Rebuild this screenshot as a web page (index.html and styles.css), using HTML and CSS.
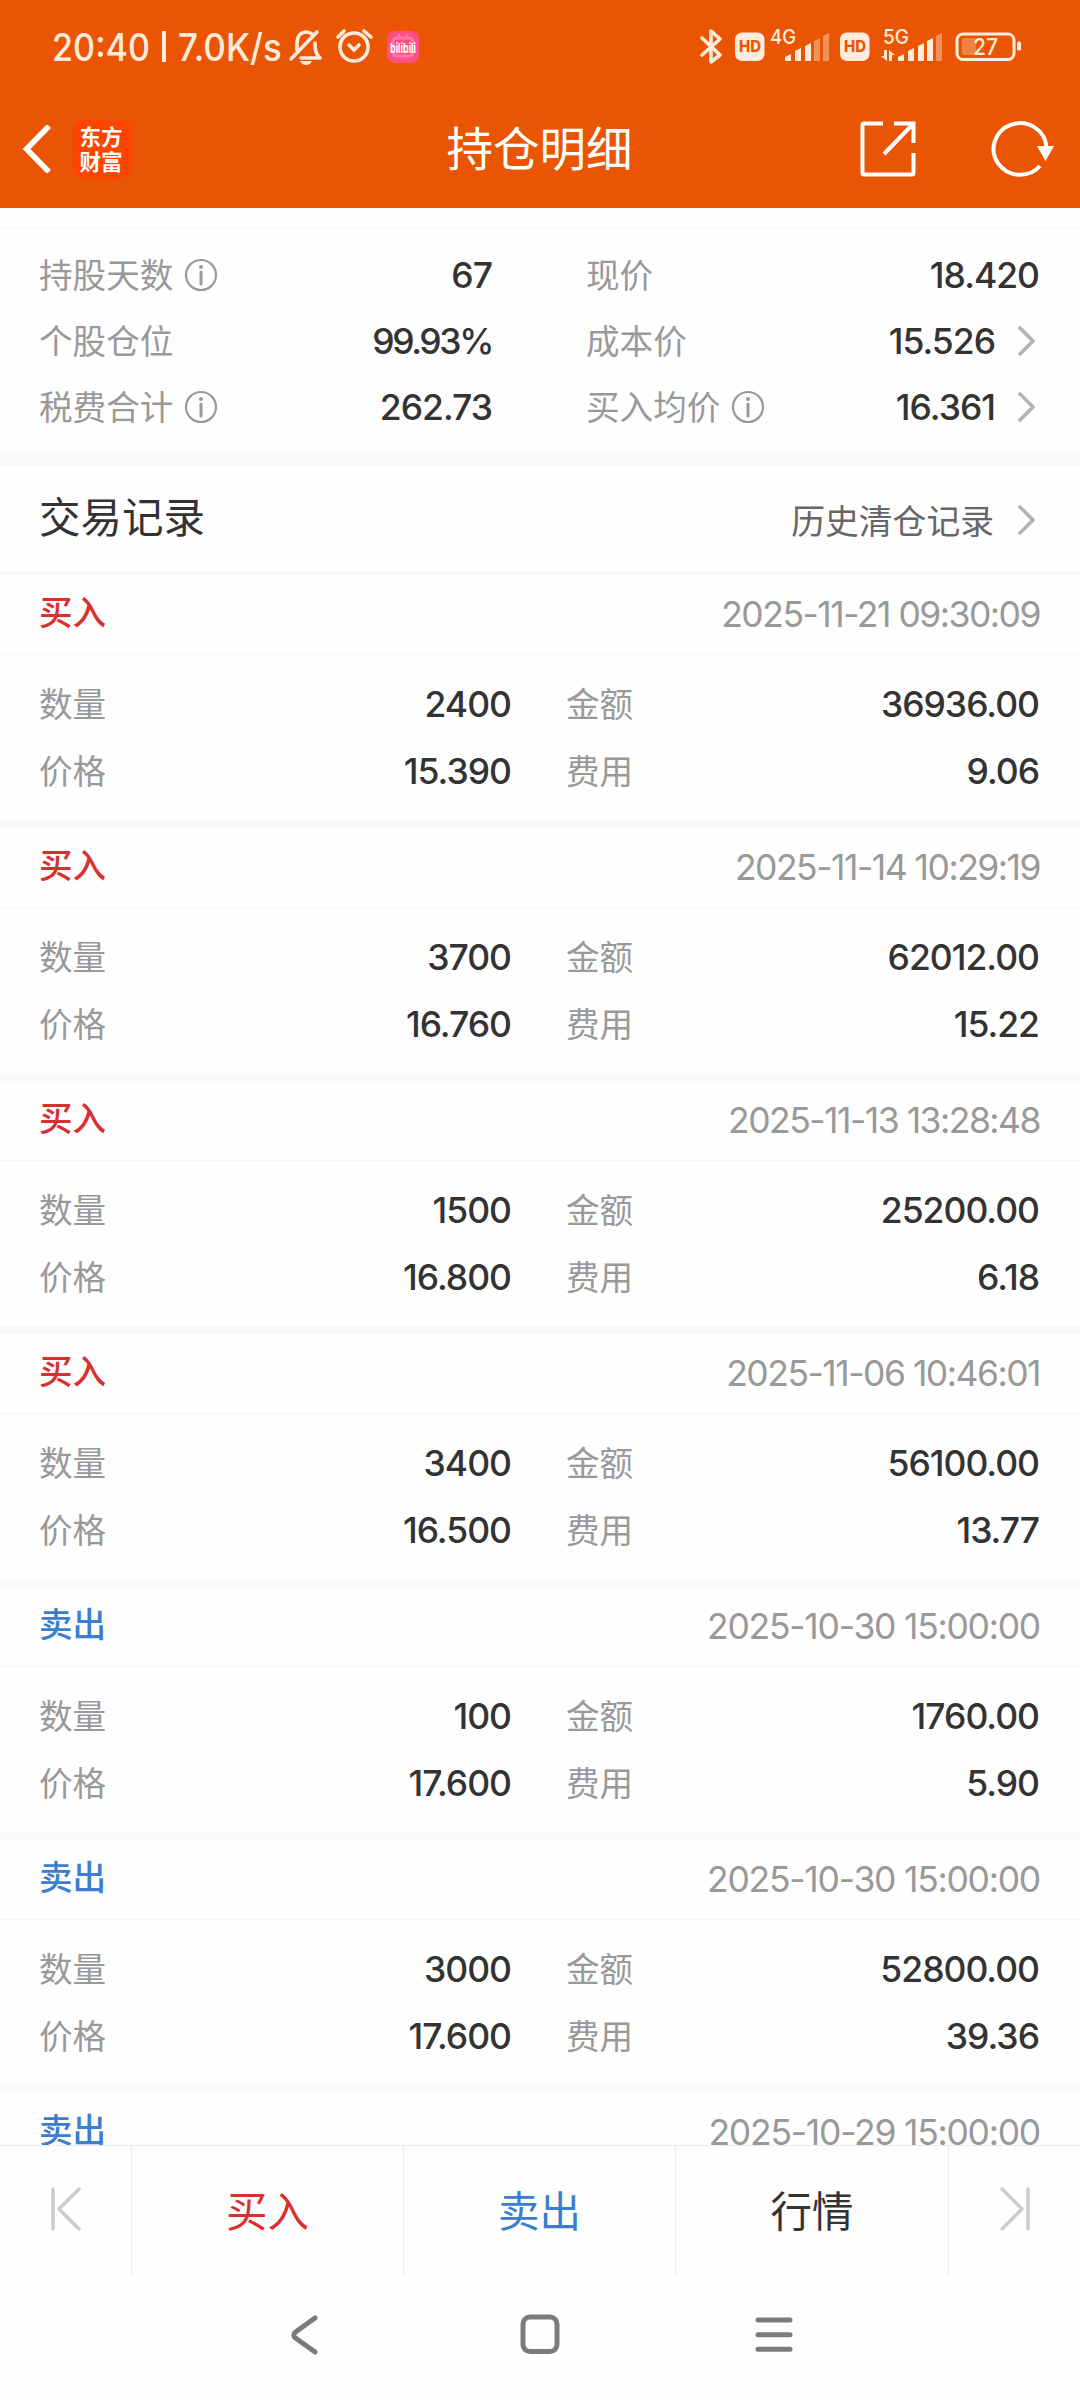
FILE: index.html
```html
<!DOCTYPE html>
<html lang="zh-CN">
<head>
<meta charset="utf-8">
<title>持仓明细</title>
<link rel="stylesheet" href="styles.css">
<script src="app.js" defer></script>
</head>
<body>
<svg class="defs" width="0" height="0">
  <symbol id="chev" viewBox="0 0 18 30"><path d="M2 2 15 15 2 28" fill="none" stroke="#b3b3b3" stroke-width="3.6" stroke-linecap="round" stroke-linejoin="round"/></symbol>
  <symbol id="info" viewBox="0 0 34 34"><circle cx="17" cy="17" r="15" fill="none" stroke="#999" stroke-width="2.2"/><circle cx="17" cy="9" r="2" fill="#999"/><path d="M17 14V26" stroke="#999" stroke-width="3" stroke-linecap="round"/></symbol>
</svg>
<div class="screen">
  <header class="top">
    <svg class="status" viewBox="0 0 1080 92">
      <g class="status-text" fill="#ffecdc">
        <text x="52" y="60.500" textLength="98" lengthAdjust="spacingAndGlyphs">20:40</text>
        <rect x="162" y="31" width="4" height="31"/>
        <text x="178" y="60.500" textLength="104" lengthAdjust="spacingAndGlyphs">7.0K/s</text>
      </g>
      <g fill="none" stroke="#ffecdc" stroke-width="3.600" stroke-linecap="round" stroke-linejoin="round">
        <path d="M291 59 317 32M297 50V44C297 36 301 32 306 32 309 32 311 33 313 35M301 58H320C316 54 315 51 315 43"/>
        <circle cx="354" cy="47" r="14"/><path d="M349 45 354 50 359 45M338 37 344 31M364 31 371 37"/>
        <path d="M702 38 720 55 711 62V31L720 39 702 55"/>
        <rect x="957" y="34" width="57" height="25.500" rx="6" stroke-width="3"/>
      </g>
      <path d="M300 61h12q-2 4-6 4t-6-4z" fill="#ffecdc"/>
      <rect x="387" y="31" width="32" height="32" rx="8" fill="#ff4f83"/>
      <rect x="393" y="38" width="20" height="18" rx="4" fill="none" stroke="#ff7ba5" stroke-width="3"/><path d="M398 34l3 4M408 34l-3 4" stroke="#ff7ba5" stroke-width="2"/>
      <text class="bili" x="390" y="53" textLength="26" lengthAdjust="spacingAndGlyphs">bilibili</text>
      <g fill="#ffecdc">
        <rect x="735" y="32.500" width="29.500" height="28.500" rx="7"/><rect x="840" y="32.500" width="29.500" height="28.500" rx="7"/>
        <text class="net" x="770" y="44" textLength="26" lengthAdjust="spacingAndGlyphs">4G</text>
        <text class="net" x="883" y="44" textLength="26" lengthAdjust="spacingAndGlyphs">5G</text>
        <path d="M785 61v-4l6-3v7zM795 61v-10l6-3v13zM805 61v-15l6-3v18zM898 61v-4l6-3v7zM908 61v-10l6-3v13zM918 61v-15l6-3v18zM927 61v-20l6-3v23z"/>
        <path opacity=".4" d="M814 61v-20l6-3v23zM823 61v-25l6-3v28zM936 61v-25l6-3v28z"/>
        <path d="M884 50h3v11l-6-5h3zM889 61v-11l6 5h-3v6z"/>
        <rect x="1017" y="41.500" width="4" height="9" rx="1.500"/>
        <rect x="962" y="38" width="14" height="17" rx="2" opacity=".3"/>
        <text class="bat" x="973" y="55" textLength="25" lengthAdjust="spacingAndGlyphs">27</text>
      </g>
      <text class="hd" x="739" y="52" textLength="22" lengthAdjust="spacingAndGlyphs">HD</text>
      <text class="hd" x="844" y="52" textLength="22" lengthAdjust="spacingAndGlyphs">HD</text>
    </svg>
    <div class="titlebar">
      <div class="side">
        <svg width="30" height="48" viewBox="0 0 30 48"><path d="M27 1 4.500 24 27 47" fill="none" stroke="#fff" stroke-width="5.500"/></svg>
        <div class="logo"><span>东方</span><span>财富</span></div>
      </div>
      <h1>持仓明细</h1>
      <div class="side actions">
        <svg width="56" height="56" viewBox="0 0 56 56" fill="none" stroke="#fff" stroke-width="4"><path d="M23 2.500H4Q2.500 2.500 2.500 4V52Q2.500 53.500 4 53.500H52Q53.500 53.500 53.500 52V32M53.500 22V2.500H34M53.500 2.500 24 33"/></svg>
        <svg width="64" height="56" viewBox="0 0 64 56"><path d="M55.500 26A26.500 25.800 0 1 0 49 45" fill="none" stroke="#fff" stroke-width="4"/><path d="M46 25H63L54.500 40z" fill="#fff"/></svg>
      </div>
    </div>
  </header>
  <main>
    <div class="spacer"></div>
    <section class="summary">
      <div class="col left">
        <div class="row"><span class="label">持股天数</span><svg class="info"><use href="#info"/></svg><b>67</b></div>
        <div class="row"><span class="label">个股仓位</span><b class="percent">99.93%</b></div>
        <div class="row"><span class="label">税费合计</span><svg class="info"><use href="#info"/></svg><b>262.73</b></div>
      </div>
      <div class="col right">
        <div class="row"><span class="label">现价</span><b>18.420</b></div>
        <div class="row"><span class="label">成本价</span><b>15.526</b><svg class="chev"><use href="#chev"/></svg></div>
        <div class="row"><span class="label">买入均价</span><svg class="info"><use href="#info"/></svg><b>16.361</b><svg class="chev"><use href="#chev"/></svg></div>
      </div>
    </section>
    <section class="heading"><h2>交易记录</h2><span class="history">历史清仓记录</span><svg class="chev"><use href="#chev"/></svg></section>
    <div class="trades" id="trades"></div>
  </main>
  <footer class="tabs">
    <div class="edge"><svg width="32" height="44" viewBox="0 0 32 44"><path d="M3 2V42M29 2 9 22 29 42" /></svg></div>
    <div class="tab buy">买入</div>
    <div class="tab sell">卖出</div>
    <div class="tab">行情</div>
    <div class="edge"><svg width="32" height="44" viewBox="0 0 32 44"><path d="M29 2V42M3 2 23 22 3 42" /></svg></div>
  </footer>
  <nav class="sysnav">
    <svg width="40" height="44" viewBox="0 0 40 44"><path d="M29 5 9.500 19Q6 22 9.500 25L29 39"/></svg>
    <svg width="40" height="44" viewBox="0 0 40 44"><rect x="3" y="4" width="34" height="34.500" rx="7"/></svg>
    <svg width="40" height="44" viewBox="0 0 40 44"><path d="M4 7H36M4 21.700H36M4 36.300H36"/></svg>
  </nav>
</div>
</body>
</html>
```
FILE: styles.css
```css
* { box-sizing: border-box; margin: 0; padding: 0; }
body { width: 1080px; height: 2400px; overflow: hidden; background: #fefefe; color: #333; font-family: Inter, "Noto Sans CJK SC", sans-serif; }
.defs { display: block; }
.screen { display: flex; flex-direction: column; height: 2400px; }
.top { height: 208px; flex: none; background: #ea5504; color: #fff; }
.status { display: block; width: 1080px; height: 92px; }
.status-text { font-size: 38px; font-weight: 500; }
.net { font-size: 20px; font-weight: 500; }
.bat { font-size: 23px; font-weight: 500; }
.hd { font-size: 16px; font-weight: 800; fill: #ea5504; }
.bili { font-size: 13px; font-weight: 700; fill: #fff; }
.titlebar { display: flex; align-items: center; height: 114px; padding: 0 25px 0 22px; }
.side { display: flex; align-items: center; flex: 1; gap: 21px; }
.actions { justify-content: flex-end; gap: 75px; }
.logo { display: flex; flex-direction: column; align-items: center; justify-content: center; width: 58px; height: 58px; border-radius: 12px; background: #ff4400; font: 700 21.500px/25px "Noto Sans CJK SC", sans-serif; padding: 0 2px 2px 0; }
h1 { font-size: 46.500px; font-weight: 400; line-height: 60px; padding-left: 2px; }
main { flex: 1; min-height: 0; overflow: hidden; }
.spacer { height: 21px; border-bottom: 1px solid #f4f4f4; }
.summary { display: flex; height: 237px; padding: 13px 40px 0 39px; border-bottom: 13px solid #f6f8fa; }
.col { display: flex; flex-direction: column; }
.left { width: 454px; }
.right { flex: 1; margin-left: 93px; }
.row { display: flex; align-items: center; height: 66px; }
.summary .label, .summary b { padding-top: 2px; }
.label { font-size: 33.600px; color: #999; line-height: 50px; }
.info { width: 34px; height: 34px; margin-left: 11px; }
b { margin-left: auto; font-size: 35.500px; font-weight: 500; line-height: 50px; letter-spacing: -1px; padding-right: 1px; }
.percent { letter-spacing: -2.400px; }
.chev { width: 18px; height: 30px; margin: 0 4px 0 22px; flex: none; }
.heading { display: flex; align-items: center; height: 109px; padding: 0 40px 0 39px; border-bottom: 4px solid #f6f8fa; }
h2 { font-size: 41.500px; font-weight: 400; line-height: 60px; padding-bottom: 1px; }
.history { margin-left: auto; font-size: 33.800px; color: #666; padding-top: 1px; }
.heading .chev { margin: 3px 4px 0 24px; }
.trade { height: 253px; border-bottom: 8px solid #f6f8fa; }
.trade-head { display: flex; justify-content: space-between; align-items: center; height: 80px; padding: 0 40px 0 39px; border-bottom: 1px solid #f4f4f6; }
.side-name { font-size: 33.600px; font-weight: 500; line-height: 50px; padding-bottom: 3px; }
.buy { color: #d82f2f; }
.sell { color: #3b7dce; }
.time { font-size: 35.500px; color: #999; letter-spacing: -1.500px; }
.sell + .time { letter-spacing: -1.250px; }
.grid { display: grid; grid-template-columns: 473px 1fr; column-gap: 54px; grid-auto-rows: 67px; padding: 16px 40px 0 39px; }
.grid .row { height: 67px; }
.tabs { display: grid; grid-template-columns: 131px 272px 272px 273px 132px; height: 131px; flex: none; border-top: 1px solid #ebebeb; }
.tabs > div { display: flex; align-items: center; justify-content: center; height: 130px; font-size: 41.500px; padding-bottom: 4px; }
.tabs > div + div { border-left: 1px solid #ebebeb; }
.edge path { fill: none; stroke: #ccc; stroke-width: 3.500; stroke-linecap: round; stroke-linejoin: round; }
.sysnav { display: flex; justify-content: center; gap: 194px; height: 124px; flex: none; padding-top: 37px; }
.sysnav svg { fill: none; stroke: #7b7b7b; stroke-width: 5; stroke-linecap: round; stroke-linejoin: round; }
```
FILE: app.js
```js
const trades = [
  ["buy", "2025-11-21 09:30:09", "2400", "36936.00", "15.390", "9.06"],
  ["buy", "2025-11-14 10:29:19", "3700", "62012.00", "16.760", "15.22"],
  ["buy", "2025-11-13 13:28:48", "1500", "25200.00", "16.800", "6.18"],
  ["buy", "2025-11-06 10:46:01", "3400", "56100.00", "16.500", "13.77"],
  ["sell", "2025-10-30 15:00:00", "100", "1760.00", "17.600", "5.90"],
  ["sell", "2025-10-30 15:00:00", "3000", "52800.00", "17.600", "39.36"],
  ["sell", "2025-10-29 15:00:00"]
];
const labels = ["数量", "金额", "价格", "费用"];
document.getElementById("trades").innerHTML = trades.map(([side, time, ...values]) => `
  <article class="trade">
    <div class="trade-head"><span class="side-name ${side}">${side === "buy" ? "买入" : "卖出"}</span><span class="time">${time}</span></div>
    <div class="grid">${values.map((v, i) => `<div class="row"><span class="label">${labels[i]}</span><b>${v}</b></div>`).join("")}</div>
  </article>`).join("");
```
